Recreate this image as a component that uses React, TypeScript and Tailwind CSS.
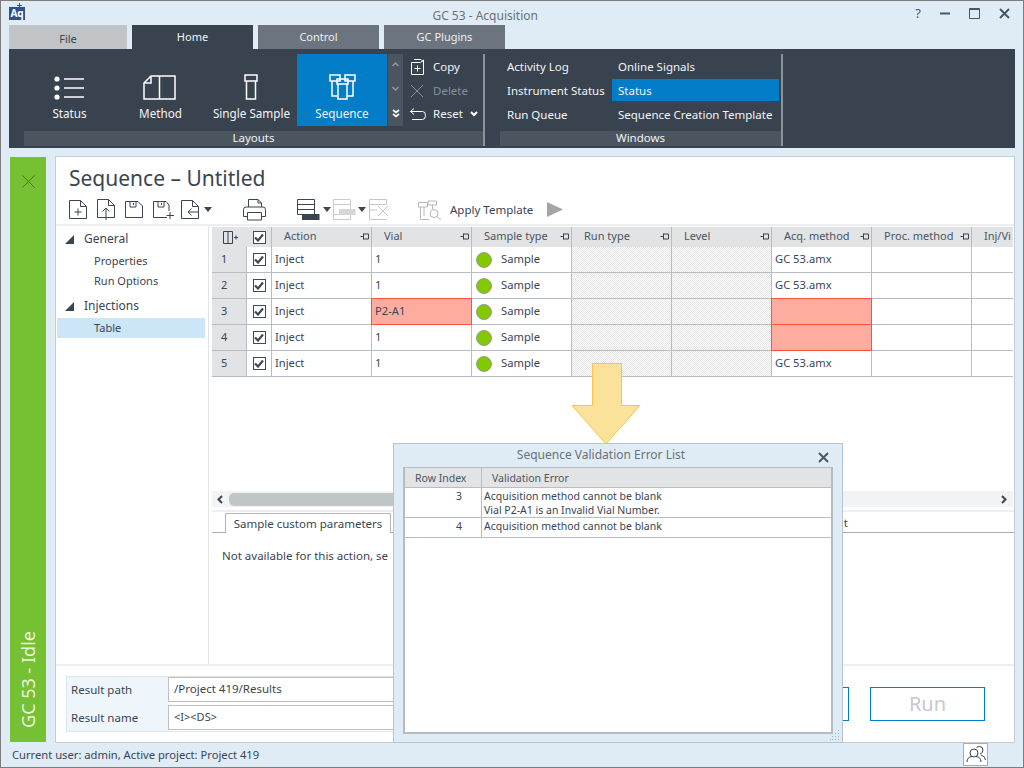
import { ReactNode } from 'react';

const font = { fontFamily: '"Noto Sans", sans-serif' };

const columns = ['Action', 'Vial', 'Sample type', 'Run type', 'Level', 'Acq. method', 'Proc. method', 'Inj/Vi'];

const rows = [
  { n: 1, vial: '1', method: 'GC 53.amx', vialError: false, methodError: false },
  { n: 2, vial: '1', method: 'GC 53.amx', vialError: false, methodError: false },
  { n: 3, vial: 'P2-A1', method: '', vialError: true, methodError: true },
  { n: 4, vial: '1', method: '', vialError: false, methodError: true },
  { n: 5, vial: '1', method: 'GC 53.amx', vialError: false, methodError: false },
];

const Icon = ({ w, h, children, className = '' }: { w: number; h: number; children: ReactNode; className?: string }) => (
  <svg width={w} height={h} viewBox={`0 0 ${w} ${h}`} fill="none" stroke="currentColor" strokeWidth="1" className={`shrink-0 ${className}`}>
    {children}
  </svg>
);

const DocBase = () => <path d="M.5 .5H11.5L17.5 6.5V18.5H.5ZM11.5 .5V6.5H17.5" />;

const Caret = ({ className = '' }: { className?: string }) => (
  <Icon w={8} h={5} className={`text-[#3a4552] ${className}`}>
    <path d="M0 0H8L4 5Z" fill="currentColor" stroke="none" />
  </Icon>
);

const Pin = () => (
  <Icon w={9} h={9} className="text-[#3a4552]">
    <path d="M.5 4.5H3M3.5 1.5V7.5M3.5 2H8.5V7H3.5" />
  </Icon>
);

const Check = ({ size = 14 }: { size?: number }) => (
  <div className="flex items-center justify-center border border-[#3f4a57] bg-white" style={{ width: size, height: size }}>
    <Icon w={10} h={9} className="text-[#3f4a57]">
      <path d="M1 4.5L4 7.5L9 1.5" strokeWidth="2.2" />
    </Icon>
  </div>
);

const RibbonButton = ({ label, icon, active = false, w = 'w-[91px]' }: { label: string; icon: ReactNode; active?: boolean; w?: string }) => (
  <div className={`${w} h-[72px] flex flex-col items-center ${active ? 'bg-[#047dc8]' : ''}`}>
    <div className="h-[49px] flex items-end justify-center pb-[3px]">{icon}</div>
    <div className="mt-[2px] text-[11.7px] leading-[16px] text-[#f2f4f6]">{label}</div>
  </div>
);

const SmallRow = ({ icon, label, dim = false, extra }: { icon: ReactNode; label: string; dim?: boolean; extra?: ReactNode }) => (
  <div className="h-[24px] flex items-center">
    <div className="w-[23px] flex justify-start">{icon}</div>
    <span className={`text-[11.5px] ${dim ? 'text-[#87909a]' : 'text-[#f2f4f6]'}`}>{label}</span>
    {extra}
  </div>
);

const HeaderCell = ({ label }: { label: string }) => (
  <div className="w-[100px] shrink-0 h-[20px] flex items-center justify-between pl-[12px] pr-[2px] pb-[1px] border-r border-[#b8bcc4] overflow-hidden">
    <span className="text-[11px] text-[#4b5662] whitespace-nowrap">{label}</span>
    <Pin />
  </div>
);

const Cell = ({ children, pattern = false, w = 'w-[100px]' }: { children?: ReactNode; pattern?: boolean; w?: string }) => (
  <div
    className={`${w} shrink-0 h-[26px] flex items-center pl-[3px] text-[11.2px] text-[#3a4552] border-r border-b border-[#b8bcc4] ${
      pattern ? 'bg-[repeating-conic-gradient(#e4e4e4_0_25%,#ffffff_0_50%)] bg-[length:2px_2px]' : 'bg-white'
    }`}
  >
    {children}
  </div>
);

// red cells sit over the neighbouring grid lines
const ErrorCell = ({ children }: { children?: ReactNode }) => (
  <div className="relative z-[1] w-[101px] -ml-[1px] -mt-[1px] shrink-0 h-[27px] flex items-center pl-[3px] text-[11.2px] text-[#3a4552] bg-[#ffaca0] border border-[#f9533a]">
    {children}
  </div>
);

export default function App() {
  return (
    <div style={font} className="relative w-[1024px] h-[768px] overflow-hidden bg-[#e0ecf5] border border-[#7d7d7d] flex flex-col">
      {/* Title bar */}
      <div className="h-[24px] shrink-0 flex items-center pl-[8px] pr-[13px]">
        <div className="w-[16px] h-[17px] mt-[-4px] relative">
          <div className="absolute left-0 bottom-0 w-[16px] h-[13px] bg-[#2f4f8f] text-white text-[10px] font-bold leading-[13px] text-center">Aq</div>
          <div className="absolute left-[10px] top-0 w-[1px] h-[5px] bg-[#2f4f8f]" />
          <div className="absolute left-[8px] top-[2px] w-[5px] h-[1px] bg-[#2f4f8f]" />
        </div>
        <div className="flex-1 text-center text-[12px] text-[#6a7178] pt-[6px] pl-[30px]">GC 53 - Acquisition</div>
        <div className="flex items-center gap-[19px] text-[#4b5662]">
          <span className="text-[13px] leading-none">?</span>
          <Icon w={10} h={10}><path d="M0 5.5H10" strokeWidth="2" /></Icon>
          <Icon w={11} h={11}><path d="M.5 .5H10.5V10.5H.5ZM.5 1.5H10.5" /></Icon>
          <Icon w={11} h={11}><path d="M1 1L10 10M10 1L1 10" strokeWidth="2" /></Icon>
        </div>
      </div>

      {/* Tabs */}
      <div className="h-[24px] shrink-0 pl-[8px] flex gap-[5px] text-[11px]">
        <div className="w-[118px] bg-[#c0c4c6] text-[#3a4552] text-center leading-[28px]">File</div>
        <div className="w-[121px] bg-[#39434f] text-[#f2f4f6] text-center leading-[24px]">Home</div>
        <div className="w-[121px] bg-[#6c757f] text-[#eef0f2] text-center leading-[24px]">Control</div>
        <div className="w-[121px] bg-[#6c757f] text-[#eef0f2] text-center leading-[24px]">GC Plugins</div>
      </div>

      {/* Ribbon */}
      <div className="h-[99px] shrink-0 mx-[8px] bg-[#39434f] flex pt-[5px] pb-[2px] pl-[15px]">
        <div className="w-[461px] flex flex-col border-r-2 border-[#8a929a]">
          <div className="h-[72px] flex">
            <RibbonButton
              label="Status"
              icon={
                <Icon w={31} h={25} className="text-white -ml-[2px]">
                  <circle cx="4" cy="4" r="2.6" fill="currentColor" stroke="none" />
                  <circle cx="4" cy="13" r="2.6" fill="currentColor" stroke="none" />
                  <circle cx="4" cy="22" r="2.6" fill="currentColor" stroke="none" />
                  <path d="M11 4H31M11 13H31M11 22H31" strokeWidth="1.5" />
                </Icon>
              }
            />
            <RibbonButton
              label="Method"
              icon={
                <Icon w={33} h={25} className="text-white -ml-[2px]">
                  <path d="M8 1H32V24H1V8ZM16.5 1V24M8 2V8H2" strokeWidth="1.5" />
                </Icon>
              }
            />
            <RibbonButton
              label="Single Sample"
              icon={
                <Icon w={14} h={26} className="text-white -ml-[1px]">
                  <path d="M1 1H13V7H1ZM2.5 7V25H11.5V7" strokeWidth="1.5" />
                </Icon>
              }
            />
            <RibbonButton
              active
              w="w-[90px]"
              label="Sequence"
              icon={
                <Icon w={27} h={26} className="text-white">
                  <path d="M1 1H11V7H1ZM3 7V22H8M16 1H26V7H16ZM18 22H24V7M8 5H19V10H8ZM9 10V25H18V10" strokeWidth="1.5" />
                </Icon>
              }
            />
            <div className="w-[15px] ml-[1px] h-[72px] bg-[#4a5560] flex flex-col items-center justify-between py-[8px]">
              <Icon w={7} h={5} className="text-[#8f97a0]"><path d="M.5 4L3.5 1L6.5 4" strokeWidth="1.5" /></Icon>
              <Icon w={7} h={5} className="text-[#8f97a0]"><path d="M.5 1L3.5 4L6.5 1" strokeWidth="1.5" /></Icon>
              <Icon w={8} h={9} className="text-white"><path d="M1 1L4 3.5L7 1M1 5L4 7.5L7 5" strokeWidth="1.7" /></Icon>
            </div>
            <div className="ml-[7px] flex-1 pt-[1px]">
              <SmallRow
                label="Copy"
                icon={
                  <Icon w={13} h={16} className="text-white ml-[1px]">
                    <path d="M.5 3.5H9.5L12.5 1V15.5H.5ZM3 .5H10L12.5 3M6.5 6.5V12.5M3.5 9.5H9.5" />
                  </Icon>
                }
              />
              <SmallRow
                dim
                label="Delete"
                icon={<Icon w={14} h={14} className="text-[#87909a]"><path d="M1 1L13 13M13 1L1 13" /></Icon>}
              />
              <div className="-mt-[1px]">
                <SmallRow
                  label="Reset"
                  icon={<Icon w={16} h={13} className="text-white"><path d="M4 .5L.5 3.5L4 6.5M.5 3.5H12.5Q15.5 3.5 15.5 7.5Q15.5 11.5 12.5 11.5H2" /></Icon>}
                  extra={<Icon w={8} h={6} className="text-white ml-[7px]"><path d="M1 1L4 4L7 1" strokeWidth="2" /></Icon>}
                />
              </div>
            </div>
          </div>
          <div className="h-[15px] mt-[5px] bg-[#4a5560] text-[11.5px] leading-[14px] text-center text-[#f2f4f6]">Layouts</div>
        </div>

        <div className="w-[283px] ml-[15px] flex flex-col border-r-2 border-[#8a929a]">
          <div className="h-[72px] flex text-[11.5px] text-[#f2f4f6]">
            <div className="w-[112px] pl-[7px] pt-[1px]">
              <div className="h-[24px] leading-[24px]">Activity Log</div>
              <div className="h-[24px] leading-[24px]">Instrument Status</div>
              <div className="h-[24px] leading-[24px]">Run Queue</div>
            </div>
            <div className="w-[167px] pt-[1px]">
              <div className="h-[24px] leading-[24px] pl-[6px]">Online Signals</div>
              <div className="h-[22px] leading-[24px] pl-[6px] bg-[#047dc8]">Status</div>
              <div className="h-[24px] mt-[2px] leading-[24px] pl-[6px] whitespace-nowrap">Sequence Creation Template</div>
            </div>
          </div>
          <div className="h-[15px] mt-[5px] bg-[#4a5560] text-[11.5px] leading-[14px] text-center text-[#f2f4f6]">Windows</div>
        </div>
      </div>

      {/* Main */}
      <div className="h-[587px] shrink-0 mt-[8px] pl-[9px] pr-[8px] flex gap-[9px]">
        <div className="w-[36px] h-[585px] mt-[1px] bg-[#76c034] flex flex-col items-center justify-between pt-[18px] pb-[14px]">
          <Icon w={13} h={13} className="text-[#4b6b3a]"><path d="M.5 .5L12.5 12.5M12.5 .5L.5 12.5" /></Icon>
          <span className="[writing-mode:vertical-rl] rotate-180 text-[18px] leading-none text-[#e9f6dc] whitespace-nowrap">GC 53 - Idle</span>
        </div>

        <div className="flex-1 min-w-0 h-[587px] bg-white border border-[#c4ced6] flex flex-col">
          <div className="h-[40px] shrink-0 pl-[13px] pt-[6px] text-[21px] leading-[30px] text-[#3a4552]">Sequence – Untitled</div>

          {/* Toolbar */}
          <div className="h-[29px] shrink-0 border-b-2 border-[#eeeeee] pl-[13px] flex items-center pb-[2px] text-[#3a4552]">
            <Icon w={18} h={19}><DocBase /><path d="M9 8.5V15.5M5.5 12H12.5" /></Icon>
            <Icon w={18} h={21} className="ml-[10px]"><DocBase /><path d="M9 21V9M5.5 12.5L9 9L12.5 12.5" /></Icon>
            <Icon w={18} h={19} className="ml-[10px]"><path d="M.5 1.5H13L17.5 6V17.5H.5ZM5 1.5V7H11V1.5M8.5 3V5" /></Icon>
            <Icon w={21} h={19} className="ml-[10px]"><path d="M.5 1.5H13L16 5V11M14 17.5H.5V1.5M5 1.5V7H11V1.5M8.5 3V5M17 12V19M13.5 15.5H21" /></Icon>
            <Icon w={18} h={19} className="ml-[7px]"><DocBase /><path d="M18 12H7M10.5 8.5L7 12L10.5 15.5" /></Icon>
            <Caret className="ml-[5px]" />
            <span className="w-[31px]" />
            <Icon w={23} h={22}><path d="M5.5 8V.5H15L18.5 4V8M15 .5V4H18.5M.5 10.5Q.5 8 3 8H20Q22.5 8 22.5 10.5V17.5H18.5M4.5 17.5H.5V10.5M4.5 13.5H18.5V21H4.5Z" /></Icon>
            <span className="w-[31px]" />
            <Icon w={23} h={21}><path d="M.5 .5H17.5V15.5H.5ZM.5 5.5H17.5M.5 10.5H17.5" /><path d="M5 15H22.5V21H5Z" fill="currentColor" stroke="none" /></Icon>
            <Caret className="ml-[3px]" />
            <Icon w={23} h={21} className="ml-[2px] text-[#c9cccf]"><path d="M.5 .5H17.5V20.5H.5ZM.5 5.5H17.5M.5 15.5H17.5" /><path d="M6 10H22.5V16H6Z" fill="#d5d7d9" stroke="none" /></Icon>
            <Caret className="ml-[2px]" />
            <Icon w={22} h={21} className="ml-[3px] text-[#c4c7ca]"><path d="M.5 .5H17.5V5.5H.5ZM.5 5.5V11H8M.5 11V20.5H17.5M9 7L19 17M19 7L9 17" /></Icon>
            <span className="w-[27px]" />
            <Icon w={24} h={20} className="text-[#b4b8bc]"><path d="M.5 2.5H9.5V7H.5ZM10 1H18.5V5H10ZM2.5 7V19.5H11M6 7V16M14.5 5V9" /><circle cx="16" cy="13.5" r="4" /><path d="M19 16.5L23 20" /></Icon>
            <span className="ml-[8px] text-[11.5px] text-[#3a4552]">Apply Template</span>
            <Icon w={16} h={15} className="ml-[14px] text-[#a3a6a8]"><path d="M0 0L16 7.5L0 15Z" fill="currentColor" stroke="none" /></Icon>
          </div>

          {/* Content */}
          <div className="h-[438px] shrink-0 flex">
            <div className="w-[153px] shrink-0 border-r border-[#e3e5e7] text-[#3a4552] pt-[1px]">
              <div className="h-[22px] flex items-center pl-[9px] gap-[10px] mt-[1px]">
                <span className="w-0 h-0 border-l-[9px] border-l-transparent border-b-[9px] border-b-[#3a4552]" />
                <span className="text-[12px]">General</span>
              </div>
              <div className="h-[20px] leading-[20px] pl-[38px] mt-[1px] text-[11px]">Properties</div>
              <div className="h-[20px] leading-[20px] pl-[38px] text-[11px]">Run Options</div>
              <div className="h-[22px] flex items-center pl-[9px] gap-[10px] mt-[4px]">
                <span className="w-0 h-0 border-l-[9px] border-l-transparent border-b-[9px] border-b-[#3a4552]" />
                <span className="text-[12px]">Injections</span>
              </div>
              <div className="h-[20px] leading-[20px] pl-[37px] mt-[1px] ml-[1px] mr-[3px] bg-[#cce6f8] text-[11px]">Table</div>
            </div>

            <div className="flex-1 min-w-0 pl-[3px] pt-[1px] flex flex-col">
              <div className="w-[801px] h-[151px] overflow-hidden">
                <div className="flex h-[20px] bg-[#e1e3e5] w-[860px]">
                  <div className="w-[35px] shrink-0 flex items-center justify-center text-[#3a4552]">
                    <Icon w={15} h={13} className="ml-[2px]"><path d="M.5 .5H9.5V12.5H.5ZM5 .5V12.5M11 6.5H15M13 4.5V8.5" /></Icon>
                  </div>
                  <div className="w-[25px] shrink-0 flex items-center justify-center border-r border-[#b8bcc4]">
                    <Check size={13} />
                  </div>
                  {columns.map((c) => (
                    <HeaderCell key={c} label={c} />
                  ))}
                </div>
                {rows.map((r) => (
                  <div key={r.n} className="flex h-[26px]">
                    <div className="w-[35px] shrink-0 h-[26px] bg-[#e1e3e5] border-r border-b border-[#b8bcc4] pl-[9px] text-[11px] leading-[24px] text-[#3a4552]">{r.n}</div>
                    <div className="w-[25px] shrink-0 h-[26px] bg-white border-r border-b border-[#b8bcc4] flex items-center justify-center">
                      <Check size={13} />
                    </div>
                    <Cell>Inject</Cell>
                    {r.vialError ? <ErrorCell>{r.vial}</ErrorCell> : <Cell>{r.vial}</Cell>}
                    <Cell>
                      <span className="w-[16px] h-[16px] ml-[1px] rounded-full bg-[#84c800] border border-[#999999]" />
                      <span className="ml-[9px]">Sample</span>
                    </Cell>
                    <Cell pattern />
                    <Cell pattern />
                    {r.methodError ? <ErrorCell /> : <Cell>{r.method}</Cell>}
                    <Cell />
                    <Cell w="w-[42px]" />
                  </div>
                ))}
              </div>

              {/* Horizontal scrollbar */}
              <div className="mt-[113px] w-[801px] h-[16px] bg-[#f1f3f4] flex items-center justify-between pl-[5px] pr-[3px]">
                <div className="flex items-center gap-[6px]">
                  <Icon w={6} h={9} className="text-[#3a4552]"><path d="M5 1L1.5 4.5L5 8" strokeWidth="2" /></Icon>
                  <div className="w-[300px] h-[13px] rounded-[5px] bg-[#c0c6c8]" />
                </div>
                <Icon w={6} h={9} className="text-[#3a4552] mr-[3px]"><path d="M1 1L4.5 4.5L1 8" strokeWidth="2" /></Icon>
              </div>

              {/* Bottom tabs */}
              <div className="mt-[3px] h-[23px] flex items-end border-t-2 border-[#eeeeee] border-b border-b-[#a9adb1] pl-[13px]">
                <div className="h-[20px] w-[166px] shrink-0 mb-[-1px] bg-white border border-b-0 border-[#b4b8bc] text-[11.5px] leading-[19px] text-center text-[#3a4552] whitespace-nowrap">Sample custom parameters</div>
                <div className="h-[20px] w-[457px] shrink-0 text-[11.5px] leading-[22px] text-right text-[#3a4552]">t</div>
              </div>
              <div className="pl-[10px] pt-[14px] text-[11.5px] text-[#3a4552] whitespace-nowrap">Not available for this action, se</div>
            </div>
          </div>

          {/* Result fields */}
          <div className="flex-1 border-t-2 border-[#eeeeee] pl-[10px] pr-[29px] pt-[10px] flex">
            <div className="w-[600px] h-[56px] bg-[#eef6fc] border border-[#dde6ed] flex text-[#3a4552]">
              <div className="w-[101px] shrink-0 pl-[4px] text-[11.5px]">
                <div className="h-[28px] leading-[25px]">Result path</div>
                <div className="h-[28px] leading-[26px]">Result name</div>
              </div>
              <div className="flex-1 bg-white">
                <div className="h-[25px] border border-[#bcc0c4] leading-[22px] pl-[5px] bg-white text-[11.5px]">/Project 419/Results</div>
                <div className="h-[25px] mt-[3px] border border-[#bcc0c4] leading-[22px] pl-[5px] bg-white text-[11px]">{'<I><DS>'}</div>
              </div>
            </div>
            <div className="ml-auto flex gap-[21px] pt-[11px]">
              <div className="w-[115px] h-[34px] border border-[#047dc8]" />
              <div className="w-[115px] h-[34px] border border-[#047dc8] text-center text-[20px] leading-[32px] text-[#c5cace]">Run</div>
            </div>
          </div>
        </div>
      </div>

      {/* Status bar */}
      <div className="flex-1 flex items-center justify-between pl-[11px] pr-[35px] text-[11.2px] text-[#3a4552]">
        <span>Current user: admin, Active project: Project 419</span>
        <div className="w-[25px] h-[23px] -mt-[1px] bg-white border border-[#a9adb1] flex items-center justify-center">
          <Icon w={20} h={17}>
            <circle cx="8" cy="7" r="4" />
            <path d="M1 16Q1 11 6 10.5M10 10.5Q15 11 15 16M10.5 1.5Q12 .5 13.5 .5Q17 .5 17 4Q17 7 14 8M15 9Q19 10 19.5 14" />
          </Icon>
        </div>
      </div>

      {/* Callout arrow */}
      <svg width="72" height="84" viewBox="0 0 72 84" className="absolute left-[569px] top-[361px] z-10">
        <path d="M22.5 1.5H51.5V43.5H70L36 82L2 43.5H22.5Z" fill="#fbe29a" stroke="#fbc34a" strokeWidth="1" />
      </svg>

      {/* Validation dialog */}
      <div className="absolute left-[392px] top-[442px] z-20 w-[450px] h-[300px] bg-[#e0ecf5] border border-[#b4c6d4] flex flex-col">
        <div className="h-[23px] shrink-0 relative text-center text-[12px] leading-[22px] text-[#6a7178] pr-[34px]">
          Sequence Validation Error List
          <Icon w={11} h={11} className="absolute right-[13px] top-[8px] text-[#4b5662]"><path d="M1 1L10 10M10 1L1 10" strokeWidth="2" /></Icon>
        </div>
        <div className="h-[267px] mx-[9px] bg-white border-2 border-[#b4bcc4] border-t">
          <div className="flex h-[20px] bg-[#e1e3e5] text-[10.5px] leading-[20px] text-[#4b5662] border-b border-[#b8bcc4]">
            <div className="w-[77px] pl-[10px] border-r border-[#b8bcc4]">Row Index</div>
            <div className="pl-[10px]">Validation Error</div>
          </div>
          <div className="flex h-[30px] border-b border-[#b8bcc4] text-[10.5px] leading-[14px] text-[#3a4552]">
            <div className="w-[77px] pr-[19px] pt-[1px] text-right border-r border-[#b8bcc4]">3</div>
            <div className="pl-[2px] pt-[1px]">
              <div>Acquisition method cannot be blank</div>
              <div>Vial P2-A1 is an Invalid Vial Number.</div>
            </div>
          </div>
          <div className="flex h-[20px] border-b border-[#b8bcc4] text-[10.5px] leading-[14px] text-[#3a4552]">
            <div className="w-[77px] pr-[19px] pt-[1px] text-right border-r border-[#b8bcc4]">4</div>
            <div className="pl-[2px] pt-[1px]">Acquisition method cannot be blank</div>
          </div>
        </div>
        <svg width="10" height="10" viewBox="0 0 10 10" className="absolute right-[2px] bottom-[2px] text-[#a9b4bd]" fill="currentColor">
          <rect x="8" y="0" width="1" height="1" /><rect x="5" y="3" width="1" height="1" /><rect x="8" y="3" width="1" height="1" />
          <rect x="2" y="6" width="1" height="1" /><rect x="5" y="6" width="1" height="1" /><rect x="8" y="6" width="1" height="1" />
          <rect x="0" y="9" width="1" height="1" /><rect x="2" y="9" width="1" height="1" /><rect x="5" y="9" width="1" height="1" /><rect x="8" y="9" width="1" height="1" />
        </svg>
      </div>
    </div>
  );
}
